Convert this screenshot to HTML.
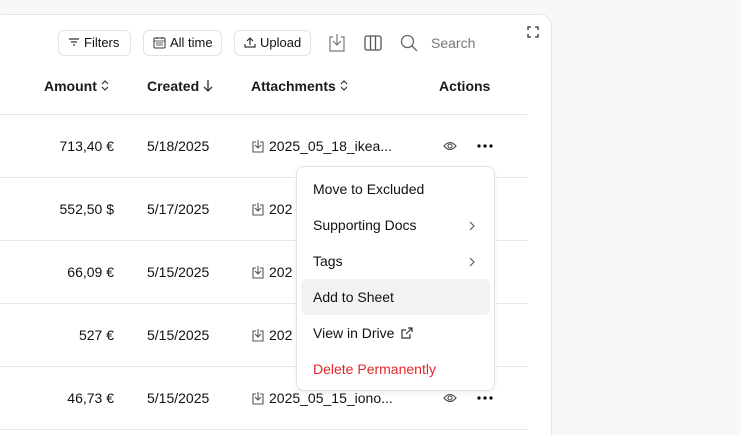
<!DOCTYPE html><html><head><style>
*{box-sizing:border-box;margin:0;padding:0}
html,body{width:741px;height:435px;overflow:hidden}
body{background:#f8f8f7;font-family:"Liberation Sans",sans-serif;position:relative;color:#111}
.card{position:absolute;left:-10px;top:14px;width:562px;height:421px;background:#fff;border:1px solid #e6e6e4;border-bottom:none;border-radius:12px 12px 0 0}
.a{position:absolute}
.btn{position:absolute;top:30px;height:26px;border:1px solid #e2e2e2;border-radius:6px;font-size:13px;line-height:24px;padding-left:9px;color:#111;background:#fff}
.btn svg{margin-right:4px}
.sep{position:absolute;left:0;width:527px;border-top:1px dotted #d4d4d4}
.h{position:absolute;top:78px;font-size:14px;font-weight:bold;color:#1a1a1a}
.h svg{vertical-align:-1px;margin-left:3px}
.t{position:absolute;font-size:14px}
.m{position:absolute;left:296px;top:166px;width:199px;height:225px;background:#fff;border:1px solid #e2e2e2;border-radius:8px;box-shadow:0 2px 6px rgba(0,0,0,.06)}
.mi{position:absolute;left:16px;font-size:14px}
.chev{position:absolute;left:172px}
.f svg{margin-right:5px}
</style></head><body>
<div class="card"></div>
<div class="btn" style="left:58px;width:73px"><svg width="12" height="12" style="vertical-align:-1px"><path d="M1 3h10M3 6h6M5 9h2" stroke="#333" stroke-width="1.2"/></svg>Filters</div>
<div class="btn" style="left:143px;width:79px"><svg width="13" height="13" style="vertical-align:-2px"><rect x="1" y="2" width="11" height="10" rx="1" fill="none" stroke="#333"/><path d="M1 5h11M4 1v2M9 1v2M3 7h7M3 9h7" stroke="#333" stroke-width=".8"/></svg>All time</div>
<div class="btn" style="left:234px;width:77px"><svg width="12" height="12" style="vertical-align:-1px"><path d="M6 9V2M3 5l3-3 3 3M1 8v3h10V8" fill="none" stroke="#333" stroke-width="1.2"/></svg>Upload</div>
<svg class="a" style="left:328px;top:33px" width="18" height="20"><path d="M5 4H2v14h14V4h-3M9 1v11M5 8l4 4 4-4" fill="none" stroke="#777" stroke-width="1.2"/></svg>
<svg class="a" style="left:364px;top:35px" width="18" height="16"><rect x="1" y="1" width="16" height="14" rx="2" fill="none" stroke="#555" stroke-width="1.3"/><path d="M6.5 1v14M11.5 1v14" stroke="#555" stroke-width="1.3"/></svg>
<svg class="a" style="left:400px;top:34px" width="18" height="18"><circle cx="7.5" cy="7.5" r="6" fill="none" stroke="#666" stroke-width="1.3"/><path d="M12 12l5 5" stroke="#666" stroke-width="1.3"/></svg>
<div class="t" style="left:431px;top:35px;color:#777">Search</div>
<svg class="a" style="left:527px;top:26px" width="12" height="12"><path d="M1 4V1h3M8 1h3v3M11 8v3H8M4 11H1V8" fill="none" stroke="#333" stroke-width="1.3"/></svg>
<div class="h" style="left:44px">Amount<svg width="10" height="13"><path d="M2 5l3-3 3 3M2 8l3 3 3-3" fill="none" stroke="#333" stroke-width="1.2"/></svg></div>
<div class="h" style="left:147px">Created<svg width="12" height="13"><path d="M6 1v11M2 8l4 4 4-4" fill="none" stroke="#333" stroke-width="1.3"/></svg></div>
<div class="h" style="left:251px">Attachments<svg width="10" height="13"><path d="M2 5l3-3 3 3M2 8l3 3 3-3" fill="none" stroke="#333" stroke-width="1.2"/></svg></div>
<div class="h" style="left:439px">Actions</div>
<div class="sep" style="top:114px;border-top:1px solid #e6e6e6"></div>
<div class="sep" style="top:177px"></div><div class="sep" style="top:240px"></div><div class="sep" style="top:303px"></div><div class="sep" style="top:366px"></div><div class="sep" style="top:429px"></div>
<div class="t" style="right:627px;top:138px">713,40 €</div><div class="t" style="left:147px;top:138px">5/18/2025</div>
<div class="t" style="right:627px;top:201px">552,50 $</div><div class="t" style="left:147px;top:201px">5/17/2025</div>
<div class="t" style="right:627px;top:264px">66,09 €</div><div class="t" style="left:147px;top:264px">5/15/2025</div>
<div class="t" style="right:627px;top:327px">527 €</div><div class="t" style="left:147px;top:327px">5/15/2025</div>
<div class="t" style="right:627px;top:390px">46,73 €</div><div class="t" style="left:147px;top:390px">5/15/2025</div>
<div class="t f" style="left:252px;top:138px"><svg width="12" height="14" style="vertical-align:-2px"><path d="M4 3H1v10h10V3H8M6 1v8M3 6l3 3 3-3" fill="none" stroke="#555" stroke-width="1.1"/></svg>2025_05_18_ikea...</div>
<div class="t f" style="left:252px;top:201px"><svg width="12" height="14" style="vertical-align:-2px"><path d="M4 3H1v10h10V3H8M6 1v8M3 6l3 3 3-3" fill="none" stroke="#555" stroke-width="1.1"/></svg>202</div>
<div class="t f" style="left:252px;top:264px"><svg width="12" height="14" style="vertical-align:-2px"><path d="M4 3H1v10h10V3H8M6 1v8M3 6l3 3 3-3" fill="none" stroke="#555" stroke-width="1.1"/></svg>202</div>
<div class="t f" style="left:252px;top:327px"><svg width="12" height="14" style="vertical-align:-2px"><path d="M4 3H1v10h10V3H8M6 1v8M3 6l3 3 3-3" fill="none" stroke="#555" stroke-width="1.1"/></svg>202</div>
<div class="t f" style="left:252px;top:390px"><svg width="12" height="14" style="vertical-align:-2px"><path d="M4 3H1v10h10V3H8M6 1v8M3 6l3 3 3-3" fill="none" stroke="#555" stroke-width="1.1"/></svg>2025_05_15_iono...</div>
<svg class="a" style="left:443px;top:141px" width="14" height="10"><path d="M1 5Q7-2 13 5Q7 12 1 5Z" fill="none" stroke="#444" stroke-width="1.1"/><circle cx="7" cy="5" r="2" fill="none" stroke="#444"/></svg>
<svg class="a" style="left:443px;top:393px" width="14" height="10"><path d="M1 5Q7-2 13 5Q7 12 1 5Z" fill="none" stroke="#444" stroke-width="1.1"/><circle cx="7" cy="5" r="2" fill="none" stroke="#444"/></svg>
<svg class="a" style="left:477px;top:144px" width="16" height="4"><circle cx="2" cy="2" r="1.6"/><circle cx="8" cy="2" r="1.6"/><circle cx="14" cy="2" r="1.6"/></svg>
<svg class="a" style="left:477px;top:396px" width="16" height="4"><circle cx="2" cy="2" r="1.6"/><circle cx="8" cy="2" r="1.6"/><circle cx="14" cy="2" r="1.6"/></svg>
<div class="m">
<div class="a" style="left:4px;top:112px;width:189px;height:36px;background:#f2f2f3;border-radius:6px"></div>
<div class="mi" style="top:14px">Move to Excluded</div>
<div class="mi" style="top:50px">Supporting Docs</div><svg class="chev" style="top:54px" width="6" height="10"><path d="M1 1l4 4-4 4" fill="none" stroke="#555" stroke-width="1.1"/></svg>
<div class="mi" style="top:86px">Tags</div><svg class="chev" style="top:90px" width="6" height="10"><path d="M1 1l4 4-4 4" fill="none" stroke="#555" stroke-width="1.1"/></svg>
<div class="mi" style="top:122px">Add to Sheet</div>
<div class="mi" style="top:158px">View in Drive <svg width="12" height="12" style="vertical-align:-1px;margin-left:3px"><path d="M9 7v4H1V3h4M7 1h4v4M11 1L5 7" fill="none" stroke="#333" stroke-width="1.2"/></svg></div>
<div class="mi" style="top:194px;color:#e5262b">Delete Permanently</div>
</div>
</body></html>
